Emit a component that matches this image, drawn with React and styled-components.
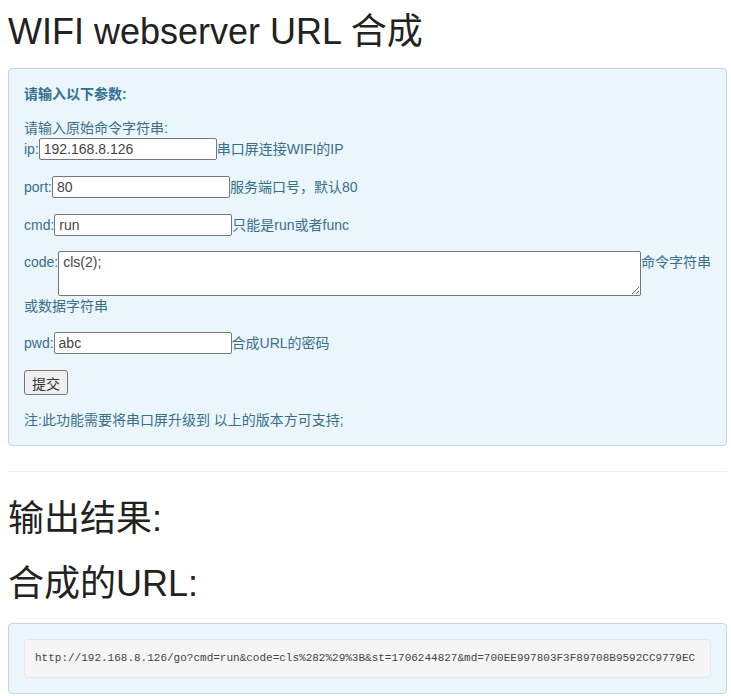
import React from "react";
import styled, { createGlobalStyle } from "styled-components";

const Global = createGlobalStyle`
  html, body { margin: 0; padding: 0; background: #fff; }
  body {
    font-family: "Liberation Sans", Arial, "Noto Sans CJK SC", sans-serif;
    font-size: 14px;
    line-height: 20px;
    color: #333;
  }
`;

const Page = styled.div`
  padding: 12px 4px 0 8px;
`;

const Title = styled.h1`
  margin: 0 0 ${(p) => p.$mb || 0}px;
  margin-top: ${(p) => p.$mt || 0}px;
  font-size: 36px;
  line-height: 40px;
  font-weight: 400;
  color: #222;
`;

const Well = styled.div`
  background: #eaf5fc;
  border: 1px solid #bcd6e4;
  border-radius: 4px;
  padding: 15px;
  color: #31708f;
`;

const Heading = styled.div`
  font-weight: bold;
  line-height: 20px;
`;

const Line = styled.div`
  line-height: 20px;
  margin-top: ${(p) => p.$mt || 0}px;
  color: #3a6f8c;
`;

const Row = styled.div`
  display: flex;
  align-items: flex-start;
  margin-top: ${(p) => p.$mt || 0}px;
  white-space: nowrap;
`;

const Label = styled.span`
  line-height: 22px;
  color: #3a6f8c;
`;

const Hint = styled.span`
  line-height: ${(p) => (p.$top ? "20px" : "22px")};
  padding-top: ${(p) => (p.$top ? "1px" : "0")};
  color: #3a6f8c;
`;

const Input = styled.input`
  box-sizing: border-box;
  width: 178px;
  height: 22px;
  margin: 0;
  padding: 0 4px;
  border: 1px solid #767676;
  border-radius: 2px;
  background: #fff;
  font-family: "Liberation Sans", Arial, sans-serif;
  font-size: 14px;
  color: #444;
`;

const Area = styled.textarea`
  box-sizing: border-box;
  width: 583px;
  height: 45px;
  margin: 0;
  padding: 1px 4px;
  border: 1px solid #767676;
  border-radius: 2px;
  background: #fff;
  font-family: "Liberation Sans", Arial, sans-serif;
  font-size: 14px;
  line-height: 18px;
  color: #444;
  resize: both;
`;

const Button = styled.button`
  box-sizing: border-box;
  height: 25px;
  padding: 0 7px;
  margin: 0;
  border: 1px solid #767676;
  border-radius: 3px;
  background: #efefef;
  font-family: "Liberation Sans", Arial, "Noto Sans CJK SC", sans-serif;
  font-size: 14px;
  color: #333;
`;

const Rule = styled.hr`
  border: 0;
  border-top: 1px solid #eee;
  margin: 25px 0 0;
`;

const Pre = styled.pre`
  margin: 0;
  padding: 10px 10px;
  background: #f5f5f5;
  border: 1px solid #e6e6e6;
  border-radius: 4px;
  font-family: "Liberation Mono", "DejaVu Sans Mono", monospace;
  font-size: 11px;
  line-height: 17px;
  color: #444;
  overflow: hidden;
`;

const url =
  "http://192.168.8.126/go?cmd=run&code=cls%282%29%3B&st=1706244827&md=700EE997803F3F89708B9592CC9779EC";

export default function App() {
  return (
    <Page>
      <Global />
      <Title $mb={16}>WIFI webserver URL 合成</Title>
      <Well>
        <Heading>请输入以下参数:</Heading>
        <Line $mt={14}>请输入原始命令字符串:</Line>
        <Row>
          <Label>ip:</Label>
          <Input defaultValue="192.168.8.126" />
          <Hint>串口屏连接WIFI的IP</Hint>
        </Row>
        <Row $mt={16}>
          <Label>port:</Label>
          <Input defaultValue="80" />
          <Hint>服务端口号，默认80</Hint>
        </Row>
        <Row $mt={16}>
          <Label>cmd:</Label>
          <Input defaultValue="run" />
          <Hint>只能是run或者func</Hint>
        </Row>
        <Row $mt={15}>
          <Label>code:</Label>
          <Area defaultValue="cls(2);" />
          <Hint $top>命令字符串</Hint>
        </Row>
        <Line>或数据字符串</Line>
        <Row $mt={16}>
          <Label>pwd:</Label>
          <Input defaultValue="abc" />
          <Hint>合成URL的密码</Hint>
        </Row>
        <Row $mt={16}>
          <Button>提交</Button>
        </Row>
        <Line $mt={15}>注:此功能需要将串口屏升级到 以上的版本方可支持;</Line>
      </Well>
      <Rule />
      <Title $mt={27}>输出结果:</Title>
      <Title $mt={25} $mb={19}>合成的URL:</Title>
      <Well>
        <Pre>{url}</Pre>
      </Well>
    </Page>
  );
}
